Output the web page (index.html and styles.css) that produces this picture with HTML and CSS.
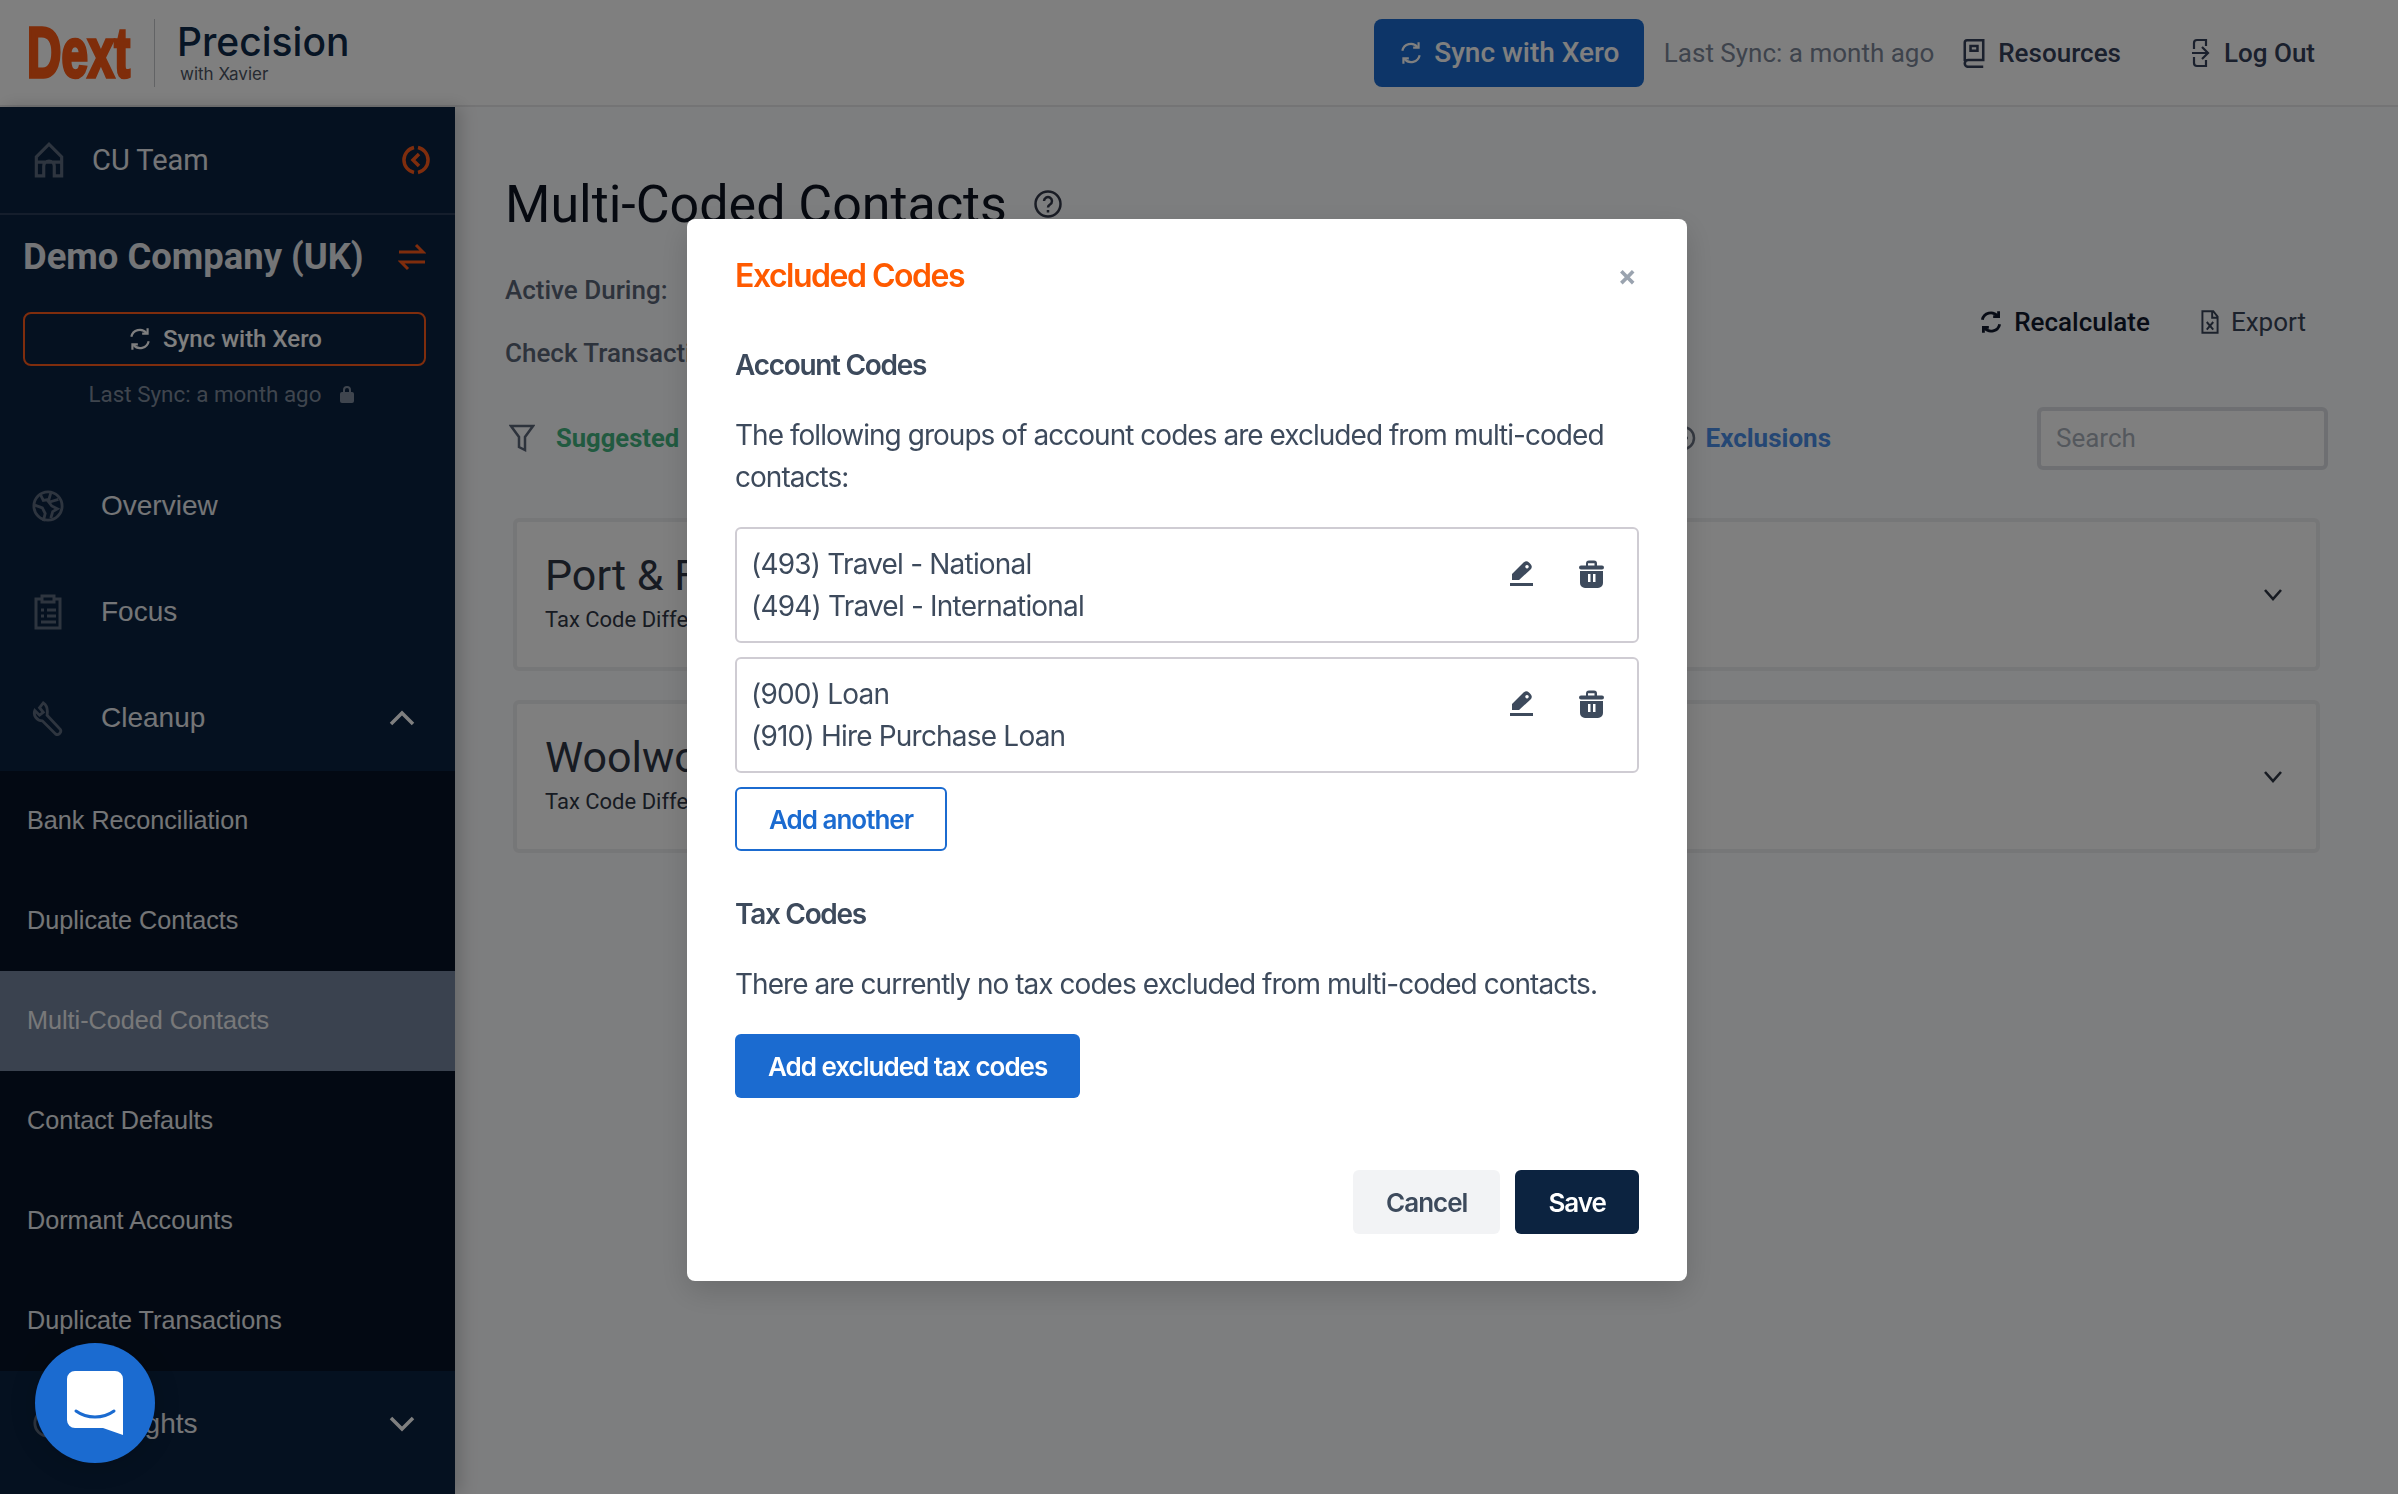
FILE: index.html
```html
<!DOCTYPE html>
<html lang="en">
<head>
    <meta charset="UTF-8">
    <title>Multi-Coded Contacts</title>
    <link rel="stylesheet" href="styles.css">
</head>
<body>
    <header class="topbar">
        <div class="logo-dext">Dext</div>
        <div class="logo-text">
            <div class="logo-name">Precision</div>
            <div class="logo-sub">with Xavier</div>
        </div>
        <div class="topbar-right">
            <button class="top-sync">
                <svg class="ico-sync" viewBox="0 0 24 24"><path d="M4 10a8 8 0 0 1 14-3.500M20 14a8 8 0 0 1-14 3.500"/><path d="M19 2v5h-5M5 22v-5h5"/></svg>
                Sync with Xero
            </button>
            <span class="top-last">Last Sync: a month ago</span>
            <a class="top-link top-resources">
                <svg class="ico-top" viewBox="0 0 24 26"><path d="M4 20V4a2 2 0 0 1 2-2h14v17H7a3 3 0 0 0 0 6h13"/><path d="M9 7h6v4H9z"/></svg>
                Resources
            </a>
            <a class="top-link">
                <svg class="ico-top" viewBox="0 0 24 30"><path d="M6 11V5a3 3 0 0 1 3-3h9v6M6 19v6a3 3 0 0 0 3 3h9v-6"/><path d="M4 15h15M14 9l6 6-6 6"/></svg>
                Log Out
            </a>
        </div>
    </header>

    <div class="layout">
        <aside class="sidebar">
            <div class="team-row">
                <svg class="nav-ico" viewBox="0 0 30 36"><path d="M3 33V15L15 3l12 12v18h-7v-9a5 5 0 0 0-10 0v9zM3 20h24"/></svg>
                <span class="team-name">CU Team</span>
                <svg class="collapse" viewBox="0 0 30 30"><path d="M17 2.500a12.800 12.800 0 0 1 0 25M13 27.500a12.800 12.800 0 0 1 0-25M18 9l-6 6 6 6"/></svg>
            </div>
            <div class="company">
                <div class="company-row">
                    <span class="company-name">Demo Company (UK)</span>
                    <svg class="swap" viewBox="0 0 28 28"><path d="M1 9h24M18 2l7 7-7 0M27 19H3M10 26l-7-7 7 0"/></svg>
                </div>
                <button class="side-sync">
                    <svg class="ico-sync" viewBox="0 0 24 24"><path d="M4 10a8 8 0 0 1 14-3.500M20 14a8 8 0 0 1-14 3.500"/><path d="M19 2v5h-5M5 22v-5h5"/></svg>
                    Sync with Xero
                </button>
                <div class="side-last">
                    Last Sync: a month ago
                    <svg class="lock" viewBox="0 0 14 18"><path d="M4 8V5a3 3 0 0 1 6 0v3" fill="none" stroke="currentColor" stroke-width="2"/><rect y="7" width="14" height="11" rx="2" fill="currentColor"/></svg>
                </div>
            </div>
            <nav class="nav">
                <a class="nav-item">
                    <svg class="nav-ico" viewBox="0 0 34 36"><circle cx="17" cy="18" r="15"/><path d="M9 6l3 6 6-1 2-7M3 17l8 3 3 6-2 8M20 31l2-7 5-3-6-3-3-4 10-3"/></svg>
                    Overview
                </a>
                <a class="nav-item">
                    <svg class="nav-ico" viewBox="0 0 30 38"><path d="M9 6H3v29h24V6h-6M9 9V3h12v6zM8 17h3M14 17h9M8 23h3M14 23h9M8 29h15"/></svg>
                    Focus
                </a>
                <a class="nav-item">
                    <svg class="nav-ico" viewBox="0 0 34 38"><path d="M12 3L8 8l4 5-4 3-5-5c-2 5 2 11 8 11l14 14c3 2 7-2 5-5L16 16c1-6-1-11-4-13z"/></svg>
                    Cleanup
                    <svg class="nav-chev" viewBox="0 0 26 16"><path d="M2 14L13 3l11 11"/></svg>
                </a>
            </nav>
            <div class="subnav">
                <a class="sub-item">Bank Reconciliation</a>
                <a class="sub-item">Duplicate Contacts</a>
                <a class="sub-item active">Multi-Coded Contacts</a>
                <a class="sub-item">Contact Defaults</a>
                <a class="sub-item">Dormant Accounts</a>
                <a class="sub-item">Duplicate Transactions</a>
            </div>
            <a class="nav-item nav-last">
                <svg class="nav-ico" viewBox="0 0 34 38"><circle cx="17" cy="18" r="14"/></svg>
                Insights
                <svg class="nav-chev" viewBox="0 0 26 16"><path d="M2 2l11 11L24 2"/></svg>
            </a>
        </aside>

        <main class="main">
            <div class="title-row">
                <h1>Multi-Coded Contacts</h1>
                <svg class="help" viewBox="0 0 30 30"><circle cx="15" cy="15" r="12.500"/><path d="M11 12a4 4 0 1 1 6 3.500c-1.500 1-2 1.500-2 3M15 21v2.500"/></svg>
            </div>
            <div class="filter-block">
                <div class="filter-rows">
                    <div class="filter-label">Active During:</div>
                    <div class="filter-label">Check Transactions</div>
                </div>
                <div class="actions">
                    <a class="action action-strong">
                        <svg class="ico-action" viewBox="0 0 24 24"><path d="M4 10a8 8 0 0 1 14-3.500M20 14a8 8 0 0 1-14 3.500"/><path d="M19 2v5h-5M5 22v-5h5"/></svg>
                        Recalculate
                    </a>
                    <a class="action action-export">
                        <svg class="ico-action ico-thin" viewBox="0 0 24 24"><path d="M5 2h10l4 5v15H5zM14 2v6h5M9 12l6 7M15 12l-6 7"/></svg>
                        Export
                    </a>
                </div>
            </div>
            <div class="toolbar">
                <svg class="funnel" viewBox="0 0 26 28"><path d="M2 2h22l-8 11v13l-6-3V13z"/></svg>
                <span class="suggested">Suggested</span>
                <span class="exclusions">
                    <svg class="excl-ico" viewBox="0 0 26 26"><circle cx="13" cy="13" r="11"/><path d="M8 13h10"/></svg>
                    Exclusions
                </span>
                <div class="search">Search</div>
            </div>
            <section class="card">
                <div class="card-body">
                    <div class="card-title">Port &amp; Fuel</div>
                    <div class="card-sub">Tax Code Differences</div>
                </div>
                <svg class="card-chev" viewBox="0 0 20 14"><path d="M2 2l8 9 8-9"/></svg>
            </section>
            <section class="card">
                <div class="card-body">
                    <div class="card-title">Woolworths</div>
                    <div class="card-sub">Tax Code Differences</div>
                </div>
                <svg class="card-chev" viewBox="0 0 20 14"><path d="M2 2l8 9 8-9"/></svg>
            </section>
        </main>
    </div>

    <div class="overlay">
        <div class="modal">
            <div class="modal-head">
                <h2>Excluded Codes</h2>
                <span class="modal-close">×</span>
            </div>
            <h3>Account Codes</h3>
            <p class="modal-text">The following groups of account codes are excluded from multi-coded contacts:</p>
            <div class="code-box">
                <div>(493) Travel - National<br>(494) Travel - International</div>
                <div class="code-tools">
                    <svg class="ico-edit" viewBox="0 0 23 26"><path d="M2 20v-6L13.500 2.500a4 4 0 0 1 5.500 0l1.500 1.500a4 4 0 0 1 0 5.500L9 20zM17 5a1.700 1.700 0 1 0 .01 0z" fill-rule="evenodd"/><rect y="23" width="23" height="3"/></svg>
                    <svg class="ico-trash" viewBox="0 0 25 28"><path d="M7 6V3.500A3 3 0 0 1 10 .5h5a3 3 0 0 1 3 3V6h-2.500V3.200h-6.500V6z"/><rect y="5.500" width="25" height="4" rx="2"/><path d="M1 11h23v12a5 5 0 0 1-5 5H6a5 5 0 0 1-5-5zM9 14v8h2.500v-8zM14 14v8h2.500v-8z" fill-rule="evenodd"/></svg>
                </div>
            </div>
            <div class="code-box">
                <div>(900) Loan<br>(910) Hire Purchase Loan</div>
                <div class="code-tools">
                    <svg class="ico-edit" viewBox="0 0 23 26"><path d="M2 20v-6L13.500 2.500a4 4 0 0 1 5.500 0l1.500 1.500a4 4 0 0 1 0 5.500L9 20zM17 5a1.700 1.700 0 1 0 .01 0z" fill-rule="evenodd"/><rect y="23" width="23" height="3"/></svg>
                    <svg class="ico-trash" viewBox="0 0 25 28"><path d="M7 6V3.500A3 3 0 0 1 10 .5h5a3 3 0 0 1 3 3V6h-2.500V3.200h-6.500V6z"/><rect y="5.500" width="25" height="4" rx="2"/><path d="M1 11h23v12a5 5 0 0 1-5 5H6a5 5 0 0 1-5-5zM9 14v8h2.500v-8zM14 14v8h2.500v-8z" fill-rule="evenodd"/></svg>
                </div>
            </div>
            <button class="btn btn-outline">Add another</button>
            <h3 class="tax-head">Tax Codes</h3>
            <p class="modal-text">There are currently no tax codes excluded from multi-coded contacts.</p>
            <button class="btn btn-blue">Add excluded tax codes</button>
            <div class="modal-foot">
                <button class="btn btn-grey">Cancel</button>
                <button class="btn btn-navy">Save</button>
            </div>
        </div>
    </div>

    <div class="launcher">
        <svg viewBox="0 0 56 64"><path d="M8 0h40a8 8 0 0 1 8 8v56l-20-7H8a8 8 0 0 1-8-8V8a8 8 0 0 1 8-8z" fill="#fff"/><path d="M9 40c11 8 27 8 38 0" fill="none" stroke="#1b6bd0" stroke-width="3" stroke-linecap="round"/></svg>
    </div>
</body>
</html>
```

FILE: styles.css
```css
* {
    box-sizing: border-box;
}

html, body {
    margin: 0;
    height: 1494px;
    overflow: hidden;
}

body {
    font-family: 'Roboto', sans-serif;
    background-color: #fbfcfe;
    color: #1f2a3c;
}

svg {
    flex: none;
    fill: none;
    stroke: currentColor;
    stroke-width: 2;
}

button {
    font-family: inherit;
    border: none;
}

/* top bar */
.topbar {
    height: 107px;
    background: #ffffff;
    border-bottom: 2px solid #e8e8ea;
    display: flex;
    align-items: center;
    padding: 0 83px 0 27px;
}

.logo-dext {
    width: 107px;
    font-family: 'Liberation Sans', sans-serif;
    font-weight: 700;
    font-size: 70px;
    line-height: 70px;
    color: #ff5a14;
    transform: scaleX(0.68);
    transform-origin: left center;
    -webkit-text-stroke: 3.500px #ff5a14;
}

.logo-text {
    border-left: 1px solid #c4c6ca;
    height: 68px;
    margin-left: 20px;
    padding-left: 22px;
}

.logo-name {
    font-family: 'Inter', sans-serif;
    font-size: 39px;
    line-height: 46px;
    font-weight: 500;
    color: #0f2a4a;
}

.logo-sub {
    font-family: 'Inter', sans-serif;
    font-size: 17px;
    line-height: 18px;
    color: #4c5564;
    padding-left: 3px;
}

.topbar-right {
    margin-left: auto;
    display: flex;
    align-items: center;
}

.top-sync {
    height: 68px;
    width: 270px;
    border-radius: 8px;
    background: #1b6bd0;
    color: #ffffff;
    font-size: 28px;
    font-weight: 500;
    display: flex;
    align-items: center;
    justify-content: center;
    gap: 10px;
}

.ico-sync {
    width: 26px;
    height: 26px;
}

.top-last {
    margin-left: 20px;
    font-size: 26px;
    color: #7c8798;
}

.top-link {
    display: flex;
    align-items: center;
    gap: 10px;
    font-size: 26px;
    font-weight: 500;
    color: #34405a;
    margin-left: 65px;
}

.top-resources {
    margin-left: 26px;
}

.ico-top {
    width: 28px;
    height: 30px;
    stroke-width: 2.200;
}

/* sidebar */
.layout {
    display: flex;
    height: 1387px;
}

.sidebar {
    width: 455px;
    flex: none;
    background: #0a2240;
    color: #ffffff;
    box-shadow: 6px 0 16px rgba(0, 0, 0, 0.18);
}

.team-row {
    height: 108px;
    display: flex;
    align-items: center;
    padding: 0 24px 0 33px;
    border-bottom: 2px solid #2a3d58;
    font-size: 29px;
}

.nav-ico {
    width: 32px;
    height: 38px;
    color: #5d6a7e;
    stroke-width: 3;
}

.team-name {
    margin-left: 27px;
    color: #e9ebee;
}

.collapse {
    width: 30px;
    height: 30px;
    margin-left: auto;
    color: #ff5a1a;
    stroke-width: 3.500;
}

.company {
    padding: 0 29px 0 23px;
}

.company-row {
    display: flex;
    align-items: center;
    justify-content: space-between;
    height: 83px;
}

.company-name {
    font-size: 36.400px;
    font-weight: 700;
    color: #e9ebee;
}

.swap {
    width: 28px;
    height: 28px;
    color: #ff5a1a;
    stroke-width: 3;
}

.side-sync {
    width: 403px;
    height: 54px;
    margin-top: 14px;
    border: 2px solid #ff5a1a;
    border-radius: 8px;
    background: transparent;
    color: #ffffff;
    font-size: 24px;
    font-weight: 500;
    display: flex;
    align-items: center;
    justify-content: center;
    gap: 10px;
}

.side-last {
    margin-top: 15px;
    display: flex;
    align-items: center;
    justify-content: center;
    gap: 19px;
    font-size: 22.400px;
    color: #7f8b9c;
    padding-right: 6px;
}

.lock {
    width: 14px;
    height: 18px;
    stroke: none;
}

.nav {
    margin-top: 46px;
}

.nav-item {
    display: flex;
    align-items: center;
    height: 106px;
    padding: 0 40px 0 32px;
    font-family: 'Liberation Sans', sans-serif;
    font-size: 28px;
    color: #e9ebee;
}

.nav-item .nav-ico {
    margin-right: 37px;
}

.nav-chev {
    width: 26px;
    height: 16px;
    margin-left: auto;
    stroke-width: 3.500;
    color: #ffffff;
}

.subnav {
    background: #071326;
    height: 600px;
}

.sub-item {
    display: flex;
    align-items: center;
    height: 100px;
    padding: 0 0 2px 27px;
    font-family: 'Liberation Sans', sans-serif;
    font-size: 25.200px;
    color: #e9ebee;
}

.sub-item.active {
    background: #74859f;
    color: #f0f1f3;
}

/* main content */
.main {
    flex: 1;
    padding: 61px 70px 0 50px;
}

.title-row {
    display: flex;
    align-items: center;
    gap: 26px;
    height: 72px;
}

h1 {
    margin: 0;
    font-size: 52px;
    font-weight: 400;
    color: #0d1320;
}

.help {
    width: 30px;
    height: 30px;
    color: #33394a;
    stroke-width: 2.500;
}

.filter-block {
    display: flex;
    justify-content: space-between;
    height: 166px;
}

.filter-rows {
    padding-top: 35px;
}

.filter-label {
    height: 63px;
    font-size: 26px;
    font-weight: 500;
    color: #5b6679;
}

.actions {
    display: flex;
    gap: 47px;
    padding: 64px 22px 0 0;
}

.action {
    display: flex;
    align-items: center;
    gap: 10px;
    height: 36px;
    font-size: 26px;
    color: #384459;
}

.action-strong {
    font-weight: 500;
    color: #10192c;
}

.action-export {
    gap: 8px;
}

.ico-action {
    width: 26px;
    height: 26px;
    stroke-width: 2.600;
}

.ico-thin {
    stroke-width: 1.800;
}

.toolbar {
    display: flex;
    align-items: center;
    height: 64px;
    padding-left: 4px;
}

.funnel {
    width: 26px;
    height: 28px;
    color: #5b6679;
    stroke-width: 2.500;
}

.suggested {
    margin-left: 21px;
    font-size: 25.600px;
    font-weight: 700;
    color: #43b581;
}

.exclusions {
    display: flex;
    align-items: center;
    gap: 10px;
    margin-left: auto;
    margin-right: 206px;
    font-size: 26px;
    font-weight: 700;
    color: #4a8fe8;
}

.excl-ico {
    width: 26px;
    height: 26px;
    color: #6a7384;
    stroke-width: 2.500;
}

.search {
    width: 291px;
    height: 63px;
    border: 4px solid #dcdfe4;
    border-radius: 6px;
    padding: 0 15px;
    line-height: 55px;
    font-size: 26px;
    color: #a9b0bb;
    background: #ffffff;
}

.card {
    margin: 48px 0 0 8px;
    width: 1807px;
    height: 153px;
    border: 4px solid #edeef0;
    border-radius: 6px;
    background: #ffffff;
    display: flex;
    justify-content: space-between;
    align-items: center;
    padding: 0 33px 0 28px;
}

.card + .card {
    margin-top: 29px;
}

.card-body {
    padding-bottom: 7px;
}

.card-title {
    font-size: 43px;
    line-height: 56px;
    color: #2f3645;
}

.card-sub {
    font-size: 22px;
    line-height: 30px;
    margin-top: 2px;
    color: #2f3645;
}

.card-chev {
    width: 20px;
    height: 14px;
    color: #2f3645;
    stroke-width: 2.600;
}

/* modal */
.overlay {
    position: fixed;
    inset: 0;
    background: rgba(0, 0, 0, 0.5);
    display: flex;
    justify-content: center;
    align-items: flex-start;
    padding: 219px 24px 0 0;
}

.modal {
    width: 1000px;
    height: 1062px;
    background: #ffffff;
    border-radius: 8px;
    padding: 0 48px;
    font-family: 'Inter', sans-serif;
    color: #3d4a5c;
    font-size: 28px;
    line-height: 42px;
    letter-spacing: -0.800px;
    box-shadow: 0 10px 30px rgba(0, 0, 0, 0.15);
}

.modal-head {
    display: flex;
    justify-content: space-between;
    align-items: center;
    height: 114px;
}

h2 {
    margin: 0;
    font-size: 32px;
    font-weight: 600;
    letter-spacing: -1.500px;
    color: #ff5a00;
}

.modal-close {
    font-size: 28px;
    font-weight: 700;
    color: #9aa3af;
    margin-right: 3px;
}

h3 {
    margin: 11px 0 0;
    font-size: 28px;
    line-height: 42px;
    font-weight: 600;
    letter-spacing: -1.300px;
}

.modal-text {
    margin: 28px 0 0;
    letter-spacing: -0.970px;
}

.code-box {
    display: flex;
    justify-content: space-between;
    height: 116px;
    margin-top: 14px;
    padding: 14px 33px 0 14px;
    border: 2px solid #cfccd3;
    border-radius: 6px;
}

.modal-text + .code-box {
    margin-top: 29px;
}

.code-tools {
    display: flex;
    gap: 46px;
    padding-top: 17px;
}

.ico-edit, .ico-trash {
    fill: #3d4a5c;
    stroke: none;
}

.ico-edit {
    width: 23px;
    height: 26px;
}

.ico-trash {
    width: 25px;
    height: 28px;
}

.btn {
    display: block;
    height: 64px;
    padding: 0 33px;
    border-radius: 6px;
    font-family: 'Inter', sans-serif;
    font-size: 26px;
    font-weight: 600;
    letter-spacing: -1px;
}

.btn-outline {
    margin-top: 14px;
    padding: 0 32px;
    background: #ffffff;
    border: 2px solid #1b6bd0;
    color: #1b6bd0;
}

.tax-head {
    margin-top: 42px;
}

.btn-blue {
    margin-top: 29px;
    background: #1b6bd0;
    color: #ffffff;
}

.modal-foot {
    display: flex;
    justify-content: flex-end;
    gap: 15px;
    margin-top: 72px;
}

.btn-grey {
    background: #f2f3f5;
    color: #3d4a5c;
}

.btn-navy {
    background: #0c2340;
    color: #ffffff;
}

/* chat launcher */
.launcher {
    position: fixed;
    left: 35px;
    top: 1343px;
    width: 120px;
    height: 120px;
    border-radius: 50%;
    background: #1b6bd0;
    display: flex;
    align-items: center;
    justify-content: center;
    box-shadow: 0 2px 32px rgba(0, 0, 0, 0.16);
}

.launcher svg {
    width: 56px;
    height: 64px;
    stroke: none;
}
```
